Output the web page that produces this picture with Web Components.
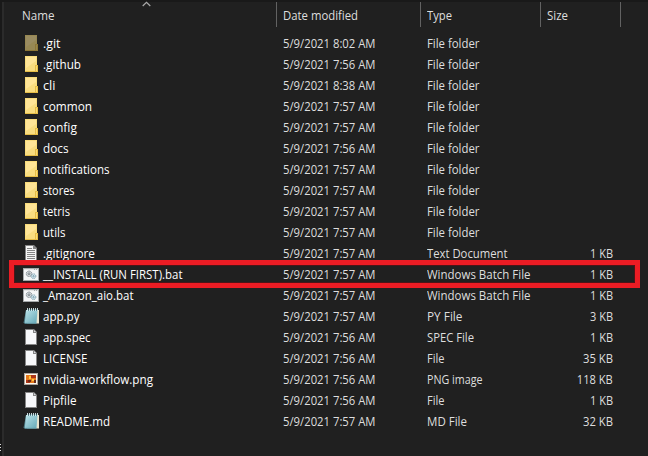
<!DOCTYPE html>
<html lang="en"><head><meta charset="utf-8"><title>Files</title>
<style>html,body{margin:0;background:#202020;overflow:hidden}</style></head><body>
<file-explorer></file-explorer>
<script>
const ICONS = {
 folder:`<path fill="#f9dc7b" d="M2 0h12v16H2z"/><path fill="#ffe597" d="M3 1h10v14H3z"/><path fill="#f9dd80" d="M3 12l10-7v10H3z"/><path fill="#e6bd47" d="M2 15h13v1H2zM12 9h3v7h-3z"/><path fill="#fbdc73" d="M13 10h1v5h-1z"/>`,
 page:`<path fill="#858585" d="M2 0h9l3 3v13H2z"/><path fill="#f7f8fa" d="M3 1h7v3h3v11H3z"/><path fill="#d5d8dc" d="M11 1l2 2h-2z"/>`,
 text:`<path fill="#858585" d="M2 0h9l3 3v13H2z"/><path fill="#f5f5f5" d="M3 1h7v3h3v11H3z"/><path stroke="#858585" d="M4 3.5h5M4 5.5h8M4 7.5h8M4 9.5h8M4 11.5h8M4 13.5h8"/>`,
 batch:`<path fill="#a5a9ab" d="M0 2h16v13H0z"/><path fill="#f5f6f7" d="M1 4h14v10H1z"/><path fill="#e4e4e4" d="M1 3h10v1H1zM12 3h1v1h-1zM14 3h1v1h-1z"/><g fill="#dce2e5" stroke="#777f85"><circle cx="6" cy="7.8" r="2.7" stroke-dasharray="1.3 .5"/><circle cx="6" cy="7.8" r="1"/></g><g fill="#d9edf4" stroke="#7a9cac"><circle cx="10.5" cy="10.2" r="2.3" stroke-dasharray="1.2 .5"/><circle cx="10.5" cy="10.2" r=".7"/></g>`,
 note:`<path fill="#4e7d87" d="M3 2L.5 15H5z"/><path fill="#e8e3ce" d="M4 2h12v13.5H4z"/><path fill="url(#g)" d="M3 2h11.5L13.5 15H1.8z"/><path stroke="#5c929d" d="M1.5 15.4h12"/><path stroke="#d9edf0" stroke-width=".9" d="M4.5 0v3M6.5 0v3M8.5 0v3M10.5 0v3M12.5 0v3M14.5 0v3"/><path stroke="#366773" stroke-width=".7" d="M5.5 1v2M7.5 1v2M9.5 1v2M11.5 1v2M13.5 1v2"/>`,
 image:`<path fill="#aaa29c" d="M1 2h14v12H1z"/><path fill="#fff8ec" d="M2 3h12v10H2z"/><path fill="#e77a1b" d="M3 4h10v8H3z"/><path fill="#ad3617" d="M3 9h4v3H3zM8 4h5v3H8z"/><path fill="#ffc942" d="M6 5h2v3H6zM9 8h2v2H9z"/><path fill="#682b19" d="M5 9h3v2H5zM11 9h2v3h-2z"/>`
};
class FitText extends HTMLElement {
 connectedCallback(){
  const r=this.attachShadow({mode:'open'});
  r.innerHTML='<style>:host{display:block;white-space:pre;line-height:21px}:host(.size) span{transform-origin:right}span{display:inline-block;transform-origin:left}</style><span></span>';
  const s=r.querySelector('span'), t=this.getAttribute('text'), w=+this.getAttribute('fit');
  s.textContent=t;
  if(w) s.style.transform=`scaleX(${w/s.getBoundingClientRect().width})`;
 }
}
customElements.define('fit-text',FitText);
class FileIcon extends HTMLElement {
 connectedCallback(){
  this.attachShadow({mode:'open'}).innerHTML=`<style>:host{display:block;width:16px;height:16px}:host([dim]){opacity:.55}svg{display:block}</style><svg width="16" height="16" viewBox="0 0 16 16" fill="none"><defs><linearGradient id="g" x1="0" y1="0" x2="1" y2="1"><stop stop-color="#bce3e9"/><stop offset="1" stop-color="#65a9b7"/></linearGradient></defs>${ICONS[this.getAttribute('kind')]}</svg>`;
 }
}
customElements.define('file-icon',FileIcon);
class FileRow extends HTMLElement {
 connectedCallback(){
  const [icon,name,nw,time,type,tw,size,sw]=this.getAttribute('data').split('|');
  this.attachShadow({mode:'open'}).innerHTML=`<style>
  :host{display:grid;position:relative;grid-template-columns:20px 240px 144px 120px 66px;height:21px;padding-left:23px;color:#dedede}
  file-icon{margin-top:2px}.name{color:#fff}.size{justify-self:end}
  :host([marked])::after{content:"";position:absolute;left:9px;top:-4px;width:621px;height:18px;border:5px solid #eb1c24;box-shadow:inset 0 0 0 1px #4b1518}
  </style><file-icon kind="${icon}" ${name==='.git'?'dim':''}></file-icon><fit-text class="name" text="${name}" fit="${nw}"></fit-text><fit-text text="5/9/2021 ${time} AM" fit="92.5"></fit-text><fit-text text="${type}" fit="${tw}"></fit-text>${size?`<fit-text class="size" text="${size} KB" fit="${sw}"></fit-text>`:''}`;
 }
}
customElements.define('file-row',FileRow);
class ColumnHeader extends HTMLElement {
 connectedCallback(){
  this.attachShadow({mode:'open'}).innerHTML=`<style>
  :host{display:grid;position:relative;grid-template-columns:255px 144px 120px 80px;height:25px;padding:2px 0 6px 22px;color:#dedede}
  div{box-sizing:border-box;border-right:1px solid #626262;padding:3px 0 0 6px}div:first-of-type{padding-left:0}
  svg{position:absolute;left:142px;top:1px}</style>
  <div><fit-text text="Name" fit="32.5"></fit-text></div><div><fit-text text="Date modified" fit="75"></fit-text></div><div><fit-text text="Type" fit="25"></fit-text></div><div><fit-text text="Size" fit="21"></fit-text></div>
  <svg width="9" height="6" fill="none"><path d="M.7 5L4.5 1.3 8.3 5" stroke="#aaa" stroke-width="1.2"/></svg>`;
 }
}
customElements.define('column-header',ColumnHeader);
const rows=[
'folder|.git|17.5|8:02|File folder|52.5','folder|.github|38|7:56|File folder|52.5','folder|cli|12.5|8:38|File folder|52.5','folder|common|49|7:57|File folder|52.5','folder|config|34|7:57|File folder|52.5','folder|docs|25.5|7:56|File folder|52.5','folder|notifications|66.5|7:57|File folder|52.5','folder|stores|31.5|7:57|File folder|52.5','folder|tetris|27|7:57|File folder|52.5','folder|utils|22.5|7:57|File folder|52.5',
'text|.gitignore|52|7:57|Text Document|80.5|1|23','batch|__INSTALL (RUN FIRST).bat|139.5|7:57|Windows Batch File|103.5|1|23','batch|_Amazon_aio.bat|90.5|7:57|Windows Batch File|103.5|1|23','note|app.py|36.5|7:57|PY File|35.5|3|23','page|app.spec|47.5|7:56|SPEC File|47|1|23','page|LICENSE|44.5|7:56|File|17.5|35|30','image|nvidia-workflow.png|110|7:56|PNG image|55.5|118|36','page|Pipfile|33.5|7:56|File|17.5|1|23','note|README.md|67|7:57|MD File|40|32|30'];
class FileExplorer extends HTMLElement {
 connectedCallback(){
  this.attachShadow({mode:'open'}).innerHTML=`<style>
  :host{display:block;position:relative;box-sizing:border-box;width:648px;height:456px;background:linear-gradient(90deg,#191919 2px,#2b2b2b 2px,#2b2b2b 4px,#202020 4px);font:12px/21px "Open Sans","Noto Sans",sans-serif;overflow:hidden}
  .top{position:absolute;inset:0 0 auto;height:2px;background:#191919}
  .edge{position:absolute;left:0;top:444px;width:1px;height:7px;background:repeating-linear-gradient(#ddd 0 1px,#191919 1px 3px)}
  </style><div class="top"></div><column-header></column-header>${rows.map((r,i)=>`<file-row data="${r}" ${i===11?'marked':''}></file-row>`).join('')}<div class="edge"></div>`;
 }
}
customElements.define('file-explorer',FileExplorer);
</script></body></html>
